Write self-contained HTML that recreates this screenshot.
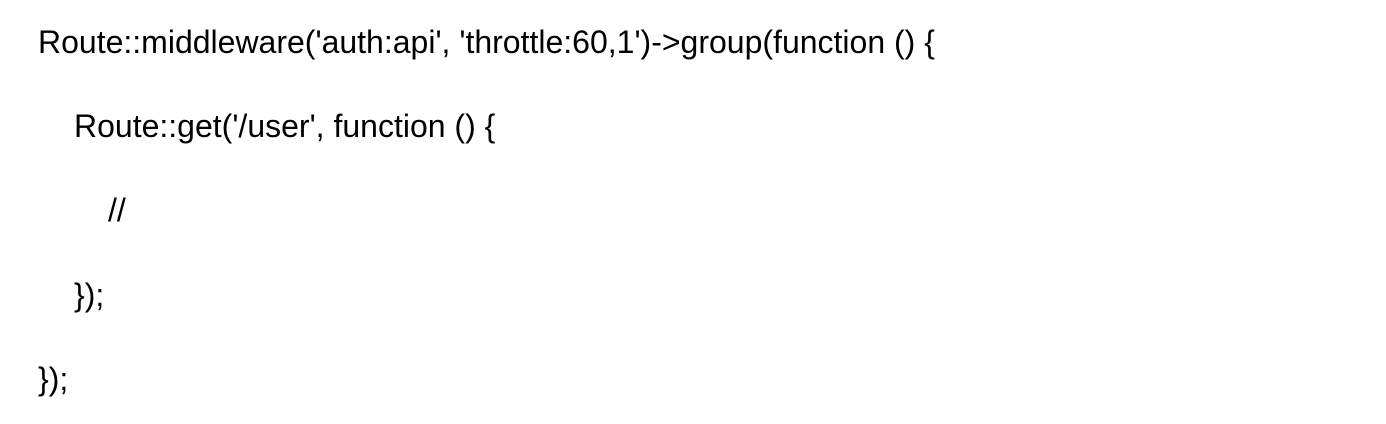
<!DOCTYPE html>
<html><head><style>
html,body{margin:0;padding:0;background:#fff;width:1386px;height:424px;overflow:hidden}
.l{position:absolute;font-family:"Liberation Sans",Arial,sans-serif;font-size:32px;color:#000;white-space:pre;line-height:1}
</style></head><body>
<div class="l" style="left:38px;top:26px">Route::middleware('auth:api', 'throttle:60,1')-&gt;group(function () {</div>
<div class="l" style="left:74px;top:110px">Route::get('/user', function () {</div>
<div class="l" style="left:108px;top:194px">//</div>
<div class="l" style="left:74px;top:279px">});</div>
<div class="l" style="left:38px;top:363px">});</div>
</body></html>
